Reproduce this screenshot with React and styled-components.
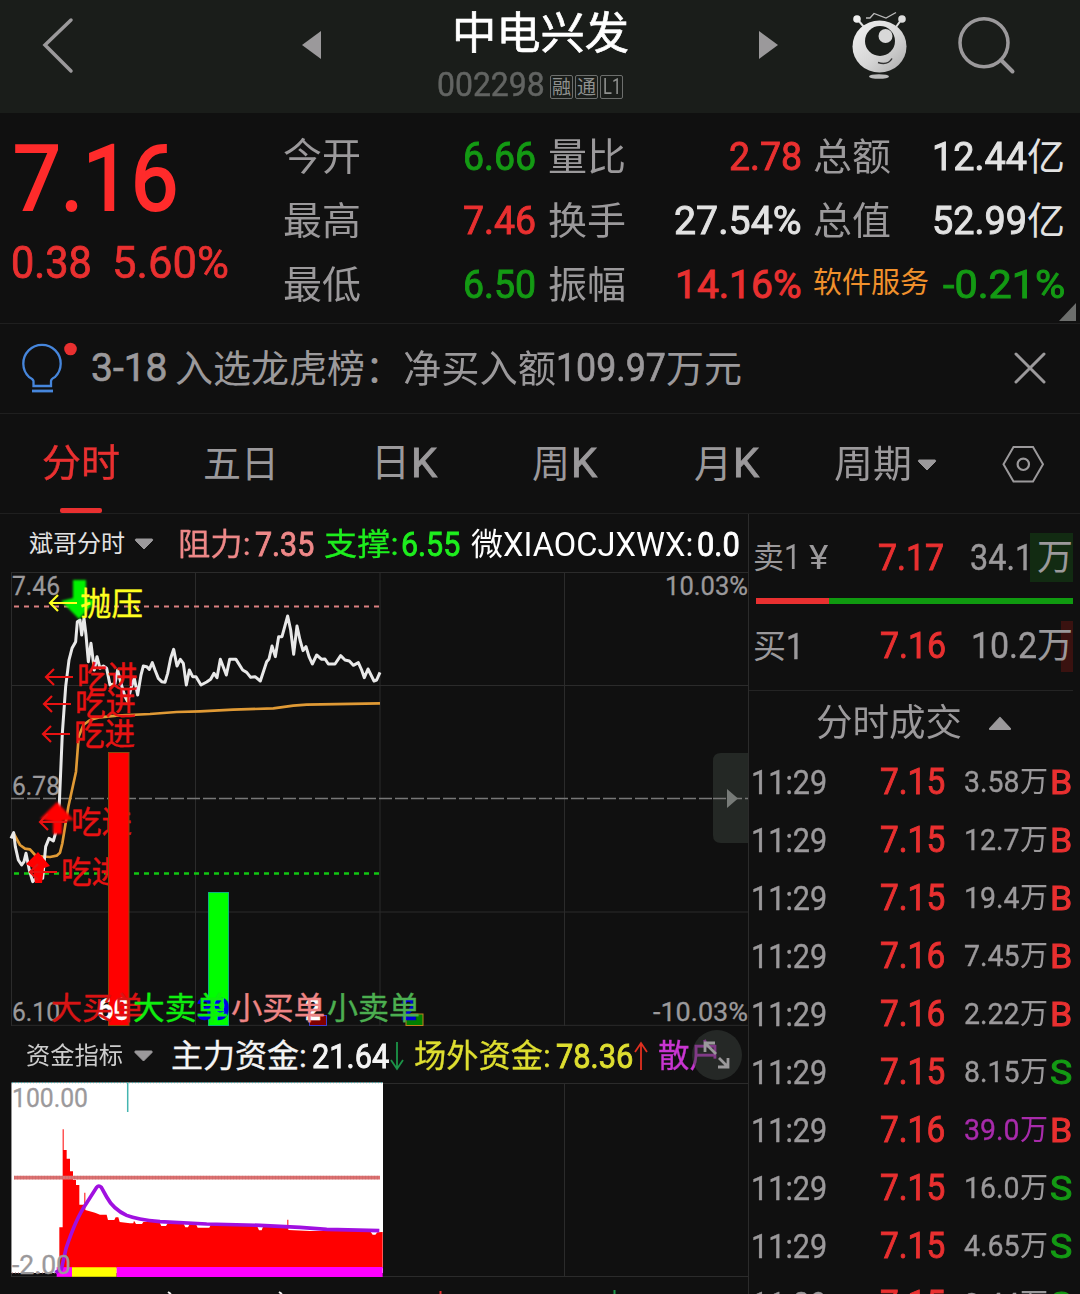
import React, { useLayoutEffect, useRef, useState } from "react";
import styled, { createGlobalStyle } from "styled-components";

const FONT = 'Roboto, "Noto Sans CJK SC", sans-serif';
const C = {
  bg: "#101010",
  header: "#1a1d1a",
  line: "#1f1f1f",
  grid: "#2b2b2b",
  gray: "#9b999b",
  red: "#e93030",
  green: "#149a14",
  light: "#e2e2e2",
};

const GlobalStyle = createGlobalStyle`
  body { margin: 0; background: ${C.bg}; font-family: ${FONT}; }
  * { box-sizing: border-box; }
  svg { display: block; flex: none; }
`;

/* Text squeezed horizontally to a given width, like the condensed numerals of the app.
   $bold is the extra stroke in em that thickens a regular weight. */
const FitBox = styled.span`
  display: inline-block;
  flex: none;
  width: ${(p) => p.$w}px;
  margin-left: ${(p) => p.$ml || 0}px;
  margin-top: ${(p) => p.$mt || 0}px;
  height: ${(p) => p.$size}px;
  line-height: ${(p) => p.$size}px;
  font-size: ${(p) => p.$size}px;
  color: ${(p) => p.$color || C.gray};
  -webkit-text-stroke: ${(p) => p.$bold || 0}em currentColor;
  white-space: pre;
`;
const FitInner = styled.span`
  display: inline-block;
  transform-origin: 0 50%;
`;
function Fit({ w, ml, mt, size, bold, color, children }) {
  const ref = useRef(null);
  const [scale, setScale] = useState(1);
  useLayoutEffect(() => {
    const natural = ref.current ? ref.current.offsetWidth : 0;
    if (natural) setScale(w / natural);
  }, [w, children]);
  return (
    <FitBox $w={w} $ml={ml} $mt={mt} $size={size} $bold={bold} $color={color}>
      <FitInner ref={ref} style={{ transform: `scaleX(${scale})` }}>{children}</FitInner>
    </FitBox>
  );
}

const Page = styled.main`
  width: 1080px;
  height: 1294px;
  overflow: hidden;
  background: ${C.bg};
  display: flex;
  flex-direction: column;
`;

/* ---------- header ---------- */
const Header = styled.header`
  height: 113px;
  flex: none;
  background: ${C.header};
  display: grid;
  grid-template-columns: 302px 135px 190px 133px 92px 106px 122px;
`;
const IconSlot = styled.div`
  padding-top: ${(p) => p.$pt || 0}px;
  padding-left: ${(p) => p.$pl || 0}px;
`;
const TitleRow = styled.div`
  display: flex;
  height: 58px;
  padding: 12px 0 0 15px;
`;
const CodeRow = styled.div`
  display: flex;
  height: 40px;
  padding-top: 9px;
`;
const Tags = styled.div`
  display: flex;
  gap: 2px;
  margin: 8px 0 0 5px;
`;
const Tag = styled.span`
  width: 23px;
  height: 24px;
  border: 1px solid #6d6f6d;
  border-radius: 2px;
  display: flex;
  align-items: center;
  justify-content: center;
`;

/* ---------- quote ---------- */
const Quote = styled.section`
  height: 211px;
  flex: none;
  border-bottom: 1px solid ${C.line};
  display: grid;
  grid-template-columns: 283px 265px 265px 253px 14px;
`;
const PriceBlock = styled.div`
  display: flex;
  flex-direction: column;
`;
const ChangeRow = styled.div`
  display: flex;
  padding: 16px 0 0 11px;
`;
const StatColumn = styled.div`
  padding-top: 12px;
`;
const Stat = styled.div`
  height: 64px;
  display: flex;
  align-items: center;
  justify-content: space-between;
  padding-right: ${(p) => p.$pr}px;
`;
const StatValue = styled.div`
  display: flex;
`;
const CornerCell = styled.div`
  display: flex;
  align-items: flex-end;
  justify-content: flex-end;
  padding: 0 4px 2px 0;
`;

const Notice = styled.section`
  height: 90px;
  flex: none;
  border-bottom: 1px solid ${C.line};
  display: flex;
  align-items: center;
  padding-left: 20px;
`;
const CloseSlot = styled.div`
  margin-left: auto;
  padding-right: 33px;
`;

const Tabs = styled.nav`
  height: 100px;
  flex: none;
  border-bottom: 1px solid ${C.line};
  display: grid;
  grid-template-columns: 203px 172px 157px 162px 140px 168px 78px;
`;
const Tab = styled.div`
  display: flex;
  align-items: center;
`;
const ActiveTab = styled.div`
  display: flex;
  flex-direction: column;
  justify-content: space-between;
  padding: 30px 0 0 42px;
`;
const Underline = styled.div`
  width: 42px;
  height: 5px;
  margin-left: 18px;
  border-radius: 2px;
  background: ${C.red};
`;

/* ---------- body ---------- */
const Body = styled.section`
  flex: 1;
  min-height: 0;
  display: grid;
  grid-template-columns: 749px 331px;
`;
const Charts = styled.div`
  border-right: 1px solid ${C.grid};
  display: flex;
  flex-direction: column;
  overflow: hidden;
`;
const IndicatorBar = styled.div`
  height: ${(p) => p.$h}px;
  flex: none;
  display: flex;
  align-items: center;
  padding-left: ${(p) => p.$pl}px;
  padding-top: ${(p) => p.$pt || 2}px;
  position: relative;
`;
const ExpandButton = styled.div`
  position: absolute;
  left: 692px;
  top: 4px;
`;

const Side = styled.aside`
  display: flex;
  flex-direction: column;
  overflow: hidden;
`;
const BookRow = styled.div`
  height: ${(p) => p.$h}px;
  flex: none;
  margin: ${(p) => p.$mt || 0}px 7px 0 0;
  display: flex;
  align-items: center;
  padding-left: 4px;
  background: linear-gradient(${(p) => p.$tint}, ${(p) => p.$tint}) no-repeat right 0 center / ${(p) => p.$tw}px 100%;
`;
const RatioBar = styled.div`
  height: 6px;
  flex: none;
  margin: 16px 7px 17px;
  display: flex;
`;
const RatioPart = styled.div`
  width: ${(p) => p.$w}px;
  background: ${(p) => p.$c};
`;
const TradesHead = styled.div`
  margin: 18px 7px 0 0;
  border-top: 1px solid #242424;
  height: 63px;
  flex: none;
  display: flex;
  align-items: center;
  padding-left: 67px;
  padding-top: 2px;
  gap: 26px;
`;
const Trade = styled.div`
  height: 58px;
  flex: none;
  display: flex;
  align-items: center;
  padding-left: 2px;
`;

const Caret = ({ w = 20, h = 12, up }) => (
  <svg width={w} height={h} viewBox="0 0 20 12">
    <path
      d={up ? "M10 1L18.5 10Q19 11 18 11H2Q1 11 1.500 10Z" : "M10 11L1.500 2.500Q1 1 2 1H18Q19 1 18.500 2.500Z"}
      fill={C.gray} stroke={C.gray} strokeLinejoin="round"
    />
  </svg>
);

const Robot = () => (
  <svg width="60" height="72" viewBox="850 10 60 72">
    <defs>
      <linearGradient id="head" x1="0" y1="0" x2="1" y2="1">
        <stop offset="0" stopColor="#f2f2f2" />
        <stop offset=".55" stopColor="#d6d6d6" />
        <stop offset="1" stopColor="#aaa" />
      </linearGradient>
    </defs>
    <path d="M858 20L864 27M901 20L896 27" stroke="#ddd" strokeWidth="2" />
    <path d="M866 18H870L874 13.500L886 18L896 12.500" fill="none" stroke="#bbb" strokeWidth="1.300" />
    <circle cx="857" cy="19" r="3.800" fill="#eee" />
    <circle cx="902" cy="19" r="3.800" fill="#ddd" />
    <ellipse cx="879.500" cy="46.500" rx="27" ry="26" fill="url(#head)" />
    <circle cx="880" cy="41" r="15" fill={C.header} />
    <circle cx="885.500" cy="36" r="7" fill="#d8d8d8" />
    <path d="M878 62.500Q888 65.500 892 58.500" fill="none" stroke="#333" strokeWidth="1.500" />
    <ellipse cx="879" cy="76.500" rx="10" ry="2.300" fill="#bbb" />
  </svg>
);

const PRICE =
  "33,835 41,818 46,860 55,900 65,915 72,905 78,880 88,930 98,965 112,950 128,955 137,860 147,835 160,843 168,815 178,730 187,520 197,380 207,300 216,265 227,245 232,185 240,180 245,225 252,175 258,225 265,305 273,250 283,330 291,290 300,325 310,318 320,325 330,375 345,370 353,330 363,370 375,410 383,425 393,385 403,355 413,405 423,345 430,318 440,320 448,328 457,308 465,330 475,355 485,365 495,367 503,340 512,295 521,268 531,318 541,298 550,310 559,375 568,330 578,350 588,350 603,375 620,366 632,358 642,340 651,353 661,298 679,345 689,298 708,298 728,330 740,337 752,352 765,350 781,363 800,305 807,297 816,258 826,290 836,230 846,230 863,168 872,210 881,283 891,198 900,240 909,272 918,260 927,290 937,312 950,285 965,298 975,297 985,312 1005,312 1022,287 1035,300 1048,303 1060,316 1075,308 1085,330 1093,353 1104,327 1122,363 1130,360 1140,337";
const AVERAGE =
  "41,820 60,855 75,866 90,868 108,888 150,891 170,887 180,878 187,850 205,740 228,635 236,530 250,495 270,480 300,472 350,467 450,462 530,456 600,454 700,449 820,445 880,437 920,434 1140,430";

/* x: left edge, w: width, y: vertical centre of the glyphs */
const Label = ({ x, y, w, s = 31, c, weight = 400, digits, children }) => (
  <text x={x} y={y + s * (digits ? 0.355 : 0.36)} textLength={w} lengthAdjust="spacingAndGlyphs"
    fontFamily={FONT} fontSize={s} fontWeight={weight} fill={c} stroke={c} strokeWidth={digits ? 0.3 : 0.4}>{children}</text>
);
const Arrow = ({ x, y, c }) => (
  <path d={`M${x + 28} ${y}H${x + 1}M${x + 9} ${y - 8}L${x + 1} ${y}L${x + 9} ${y + 8}`} fill="none" stroke={c} strokeWidth="2.200" />
);
const BUYS = [[45, 677, 77], [43, 704, 75], [42, 734, 74], [39, 822, 71], [29, 872, 61]];

const MainChart = () => (
  <svg width="748" height="454" viewBox="0 572 748 454">
    <defs><filter id="soft"><feGaussianBlur stdDeviation="1.200" /></filter></defs>
    <g stroke={C.grid} fill="none">
      <path d="M11.500 572V1026M195.500 572V1026M380 572V1026M564.500 572V1026M11 572.500H748M11 685.500H748M11 912H748M11 1025.300H748" />
    </g>
    <path d="M11 798.500H748" stroke="#777" strokeWidth="1.500" strokeDasharray="13 3" />
    <Label x={12} y={586} w={48} s={26} c={C.gray} digits>7.46</Label>
    <Label x={12} y={785.500} w={48} s={26} c={C.gray} digits>6.78</Label>
    <Label x={12} y={1011.500} w={48} s={26} c={C.gray} digits>6.10</Label>
    <Label x={665} y={586} w={83} s={26} c={C.gray} digits>10.03%</Label>
    <Label x={653} y={1011.500} w={95} s={26} c={C.gray} digits>-10.03%</Label>
    <path d="M14 606.500H380" stroke="#d98080" strokeWidth="2" strokeDasharray="5 5" />
    <path d="M14 873.500H380" stroke="#12c812" strokeWidth="2.300" strokeDasharray="5 5" />
    <g transform="translate(0 560) scale(.33333)" fill="none" strokeLinejoin="round">
      <polyline points={AVERAGE} stroke="#e09a35" strokeWidth="8" />
      <polyline points={PRICE} stroke="#e8e8e8" strokeWidth="9" />
    </g>
    <path d="M73 580H86V598L96 601L79 619L61 601L73 598Z" fill="#00f000" filter="url(#soft)" />
    <g fill="#f00">
      <path d="M57 802L74 820L62 821V834H53V822L40 819Z" filter="url(#soft)" />
      <path d="M38 852L50 866L44 868L42 883H35L33 868L26 864Z" />
    </g>
    {BUYS.map(([ax, y, x]) => (
      <g key={y}><Arrow x={ax} y={y} c="#e81212" /><Label x={x} y={y} w={61} c="#e81212">吃进</Label></g>
    ))}
    <Arrow x={49} y={603} c="#ffff20" />
    <Label x={80} y={603} w={63} s={32} c="#ffff20">抛压</Label>
    <rect x="108.500" y="752.500" width="20.500" height="273" fill="#f00" stroke="#8a4a10" />
    <rect x="208.500" y="892.500" width="20" height="133" fill="#0f0" stroke="#10b080" />
    <rect x="309.500" y="1015.500" width="17" height="10" fill="#800000" stroke="#4040d0" />
    <rect x="406" y="1014" width="17" height="11.500" fill="#008000" stroke="#c08020" />
    <Label x={97} y={1009} w={33} s={32} c="#fff" weight={700} digits>60</Label>
    <Label x={197} y={1009} w={33} s={32} c="#0000e8" weight={700} digits>39</Label>
    <Label x={305} y={1009} w={16} s={32} c="#fff" weight={700} digits>2</Label>
    <Label x={401} y={1009} w={16} s={32} c="#0000d8" weight={700} digits>2</Label>
    <Label x={51} y={1008} w={93} c="#d81414">大买单</Label>
    <Label x={133} y={1008} w={95} c="#0eee0e">大卖单</Label>
    <Label x={231} y={1008} w={94} c="#ee8585">小买单</Label>
    <Label x={327} y={1008} w={93} c="#4caf50">小卖单</Label>
    <path d="M748 753H721Q713 753 713 761V835Q713 843 721 843H748Z" fill="#242825" />
    <path d="M713 798.500H748" stroke="#777" strokeWidth="1.500" strokeDasharray="13 3" />
    <path d="M727 789L738 798.500L727 808Z" fill="#777b78" />
  </svg>
);

const FundChart = () => (
  <svg width="748" height="212" viewBox="0 1082 748 212">
    <g stroke={C.grid}>
      <path d="M11.500 1083V1276M564.500 1083V1276M383 1083.500H748M11 1276.500H748" />
    </g>
    <rect x="11.500" y="1082.500" width="371.500" height="190.500" fill="#fff" />
    <path d="M12 1082.700H383" stroke="#3aa" strokeDasharray="1 2" />
    <path d="M12 1273H60" stroke="#a66" strokeDasharray="1 2" />
    <path d="M127.700 1083V1112" stroke="#45b5b0" strokeWidth="1.500" />
    <g transform="translate(0 1070) scale(.33333)">
      <path d="M178 595V472H188V178H191V240H200V266H210V304H219V330H228V345H238V404H253V368H256V420L285 428L300 434H320L324 450H343L347 442H355L359 456L390 460H400L402 452L408 462H426L430 456H478L484 468H498L503 460H550L556 472H564L569 462H588L593 473H628L632 465H770L777 481H785L790 468H862V449H865V480L930 483H1110L1118 494H1126L1132 487L1148 486V595Z" fill="#f00" />
      <path d="M42 323H1140" stroke="#dc7070" strokeWidth="11" />
      <path d="M42 323H1140" stroke="#b66" strokeWidth="11" strokeDasharray="2 7" opacity=".6" />
      <path d="M170 606H216" stroke="#f0f" strokeWidth="29" />
      <path d="M216 606H350" stroke="#ff0" strokeWidth="29" />
      <path d="M350 606H1148" stroke="#f0f" strokeWidth="30" />
      <path d="M166 608L184 598L198 536Q228 445 258 402L290 352Q296 344 304 352L320 381Q340 418 380 436Q410 448 480 455L620 462L780 466L900 472L980 478L1138 482" fill="none" stroke="#a010e0" strokeWidth="11" />
    </g>
    <Label x={12} y={1098} w={76} s={26} c={C.gray} digits>100.00</Label>
    <Label x={12} y={1264.500} w={59} s={26} c={C.gray} digits>-2.00</Label>
    <g strokeWidth="2">
      <path d="M168 1292L171 1294M279 1292L282 1294" stroke="#eee" />
      <path d="M440.500 1291V1294" stroke={C.red} />
      <path d="M614.500 1290V1294" stroke="#1c9448" />
    </g>
  </svg>
);

const UpDown = ({ up }) => (
  <svg width="14" height="30" viewBox="0 0 14 30">
    <path d={up ? "M7 29V2M1 11L7 2L13 11" : "M7 1V28M1 19L7 28L13 19"} fill="none" stroke={up ? "#e03020" : "#1c9448"} strokeWidth="1.800" />
  </svg>
);

const STATS = [
  { pr: 12, rows: [["今开", "6.66", 73, C.green], ["最高", "7.46", 73, C.red], ["最低", "6.50", 73, C.green]] },
  { pr: 11, rows: [["量比", "2.78", 73, C.red], ["换手", "27.54%", 128, C.light], ["振幅", "14.16%", 127, C.red]] },
  { pr: 1, rows: [["总额", "12.44", 95, C.light, "亿"], ["总值", "52.99", 95, C.light, "亿"], ["软件服务", "-0.21%", 122, C.green]] },
];

const TRADES = [
  ["7.15", "3.58", "B"], ["7.15", "12.7", "B"], ["7.15", "19.4", "B"], ["7.16", "7.45", "B"], ["7.16", "2.22", "B"],
  ["7.15", "8.15", "S"], ["7.16", "39.0", "B", "#a82bab"], ["7.15", "16.0", "S"], ["7.15", "4.65", "S"], ["7.15", "3.44", "S"],
];

export default function App() {
  return (
    <Page>
      <GlobalStyle />
      <Header>
        <IconSlot $pt={15} $pl={40}>
          <svg width="36" height="60" viewBox="40 15 36 60"><path d="M71 20L45 45L71 71" fill="none" stroke={C.gray} strokeWidth="3.500" strokeLinecap="round" /></svg>
        </IconSlot>
        <IconSlot $pt={31}>
          <svg width="19" height="28"><path d="M0 14L19 0V28Z" fill={C.gray} /></svg>
        </IconSlot>
        <div>
          <TitleRow><Fit w={177} size={44} bold={0.015} color="#fff">中电兴发</Fit></TitleRow>
          <CodeRow>
            <Fit w={108} size={34} bold={0.015} color="#626462">002298</Fit>
            <Tags>
              <Tag><Fit w={19} size={19} color="#8f918f">融</Fit></Tag>
              <Tag><Fit w={19} size={19} color="#8f918f">通</Fit></Tag>
              <Tag><Fit w={18} size={22} color="#8f918f">L1</Fit></Tag>
            </Tags>
          </CodeRow>
        </div>
        <IconSlot $pt={31} $pl={132}>
          <svg width="19" height="28"><path d="M0 0L19 14L0 28Z" fill={C.gray} /></svg>
        </IconSlot>
        <IconSlot $pt={10} $pl={90}><Robot /></IconSlot>
        <IconSlot $pt={14} $pl={104}>
          <svg width="62" height="62" viewBox="956 14 62 62">
            <circle cx="984" cy="42.800" r="24" fill="none" stroke={C.gray} strokeWidth="3.500" />
            <path d="M1001 60L1012.500 71.500" stroke={C.gray} strokeWidth="4" strokeLinecap="round" />
          </svg>
        </IconSlot>
      </Header>

      <Quote>
        <PriceBlock>
          <Fit ml={13} mt={22} w={165} size={90} bold={0.024} color="#ff2b2b">7.16</Fit>
          <ChangeRow>
            <Fit w={81} size={44} color={C.red} bold={0.02}>0.38</Fit>
            <Fit ml={20} w={117} size={44} color={C.red} bold={0.015}>5.60%</Fit>
          </ChangeRow>
        </PriceBlock>
        {STATS.map((col, i) => (
          <StatColumn key={i}>
            {col.rows.map(([label, value, w, color, unit]) => (
              <Stat key={label} $pr={col.pr}>
                {label.length > 2
                  ? <Fit w={116} size={29} mt={-3} color="#f0902c">{label}</Fit>
                  : <Fit w={78} size={38} mt={-1}>{label}</Fit>}
                <StatValue>
                  <Fit w={w} size={39} mt={1} bold={0.024} color={color}>{value}</Fit>
                  {unit && <Fit w={38} size={38} mt={1} color={color}>{unit}</Fit>}
                </StatValue>
              </Stat>
            ))}
          </StatColumn>
        ))}
        <CornerCell><svg width="17" height="18"><path d="M17 0V18H0Z" fill="#6c6e6c" /></svg></CornerCell>
      </Quote>

      <Notice>
        <svg width="60" height="56" viewBox="20 340 60 56">
          <g fill="none" stroke="#4686dc" strokeWidth="2.300">
            <path d="M33.500 385V380Q33 378 29 376A18.700 18.700 0 1 1 55 376Q51 378 51 380V385Z" />
            <path d="M32 390H53" strokeWidth="2.800" />
          </g>
          <circle cx="70.500" cy="348" r="6.300" fill={C.red} />
        </svg>
        <Fit ml={11} w={77} size={39} bold={0.018}>3-18</Fit>
        <Fit ml={7} w={228} size={38}>入选龙虎榜：</Fit>
        <Fit w={153} size={38}>净买入额</Fit>
        <Fit w={110} size={39} bold={0.018}>109.97</Fit>
        <Fit w={76} size={38}>万元</Fit>
        <CloseSlot>
          <svg width="34" height="34"><path d="M3 2L31 30M31 2L3 30" stroke={C.gray} strokeWidth="3" strokeLinecap="round" /></svg>
        </CloseSlot>
      </Notice>

      <Tabs>
        <ActiveTab><Fit w={78} size={38} bold={0.01} color={C.red}>分时</Fit><Underline /></ActiveTab>
        <Tab><Fit w={76} size={38}>五日</Fit></Tab>
        <Tab><Fit ml={-4} w={39} size={39}>日</Fit><Fit ml={1} w={26} size={40} bold={0.022}>K</Fit></Tab>
        <Tab><Fit w={38} size={38}>周</Fit><Fit ml={1} w={26} size={40} bold={0.022}>K</Fit></Tab>
        <Tab><Fit w={38} size={38}>月</Fit><Fit ml={1} w={26} size={40} bold={0.022}>K</Fit></Tab>
        <Tab><Fit w={78} size={38}>周期</Fit><IconSlot $pt={2} $pl={5}><Caret /></IconSlot></Tab>
        <Tab>
          <svg width="42" height="40" viewBox="1002 444 42 40">
            <path d="M1013.500 447H1033L1043 464.300L1033 481.500H1013.500L1003.500 464.300Z" fill="none" stroke={C.gray} strokeWidth="2" />
            <circle cx="1023.300" cy="464.300" r="5.700" fill="none" stroke={C.gray} strokeWidth="2.200" />
          </svg>
        </Tab>
      </Tabs>

      <Body>
        <Charts>
          <IndicatorBar $h={58} $pl={29}>
            <Fit w={96} size={24} color={C.light}>斌哥分时</Fit>
            <IconSlot $pl={9}><Caret /></IconSlot>
            <Fit ml={24} w={73} size={31} bold={0.01} color="#ee8888">阻力:</Fit>
            <Fit ml={4} w={59} size={33} bold={0.026} color="#ee8888">7.35</Fit>
            <Fit ml={10} w={75} size={31} bold={0.01} color="#1eee1e">支撑:</Fit>
            <Fit ml={2} w={59} size={33} bold={0.026} color="#1eee1e">6.55</Fit>
            <Fit ml={11} w={32} size={31} color="#fff">微</Fit>
            <Fit w={190} size={33} color="#fff">XIAOCJXWX:</Fit>
            <Fit ml={4} w={43} size={33} bold={0.026} color="#fff">0.0</Fit>
          </IndicatorBar>
          <MainChart />
          <IndicatorBar $h={56} $pl={26} $pt={4}>
            <Fit w={97} size={24} color="#ccc">资金指标</Fit>
            <IconSlot $pl={10}><Caret w={21} /></IconSlot>
            <Fit ml={17} w={136} size={32} bold={0.01} color="#f4f4f4">主力资金:</Fit>
            <Fit ml={5} w={77} size={34} bold={0.026} color="#f4f4f4">21.64</Fit>
            <IconSlot $pl={1}><UpDown /></IconSlot>
            <Fit ml={10} w={137} size={32} bold={0.01} color="#dede30">场外资金:</Fit>
            <Fit ml={5} w={77} size={34} bold={0.026} color="#dede30">78.36</Fit>
            <IconSlot $pl={1}><UpDown up /></IconSlot>
            <Fit ml={10} w={63} size={32} bold={0.01} color="#c935d2">散户</Fit>
            <ExpandButton>
              <svg width="50" height="50">
                <circle cx="25" cy="25" r="25" fill="#39403b" fillOpacity=".5" />
                <path d="M13 22V13H23M13 13L24 24M36 28V37H26M36 37L27 28" fill="none" stroke={C.gray} strokeWidth="2.800" />
              </svg>
            </ExpandButton>
          </IndicatorBar>
          <FundChart />
        </Charts>

        <Side>
          <BookRow $h={49} $mt={19} $tint="#122b12" $tw={43}>
            <Fit w={31} size={31}>卖</Fit><Fit w={17} size={35}>1</Fit>
            <Fit ml={8} w={19} size={33}>¥</Fit>
            <Fit ml={50} w={66} size={37} bold={0.024} color={C.red}>7.17</Fit>
            <Fit ml={26} w={63} size={37} bold={0.012}>34.1</Fit><Fit ml={4} w={36} size={36}>万</Fit>
          </BookRow>
          <RatioBar><RatioPart $w={73} $c={C.red} /><RatioPart $w={244} $c="#109a10" /></RatioBar>
          <BookRow $h={51} $tint="#3a1210" $tw={12}>
            <Fit w={33} size={33}>买</Fit><Fit w={18} size={37} bold={0.012}>1</Fit>
            <Fit ml={76} w={66} size={37} mt={-2} bold={0.024} color={C.red}>7.16</Fit>
            <Fit ml={25} w={66} size={37} mt={-2} bold={0.012}>10.2</Fit><Fit w={36} size={36} mt={-2}>万</Fit>
          </BookRow>
          <TradesHead><Fit w={146} size={37}>分时成交</Fit><Caret w={24} h={15} up /></TradesHead>
          {TRADES.map(([price, vol, side, c], i) => (
            <Trade key={i}>
              <Fit w={76} size={33} bold={0.012}>11:29</Fit>
              <Fit ml={53} w={65} size={36} bold={0.024} color={C.red}>{price}</Fit>
              <Fit ml={19} w={56} size={30} bold={0.012} color={c}>{vol}</Fit>
              <Fit w={28} size={29} color={c}>万</Fit>
              <Fit ml={2} w={22} size={34} bold={0.03} color={side === "B" ? C.red : C.green}>{side}</Fit>
            </Trade>
          ))}
        </Side>
      </Body>
    </Page>
  );
}
